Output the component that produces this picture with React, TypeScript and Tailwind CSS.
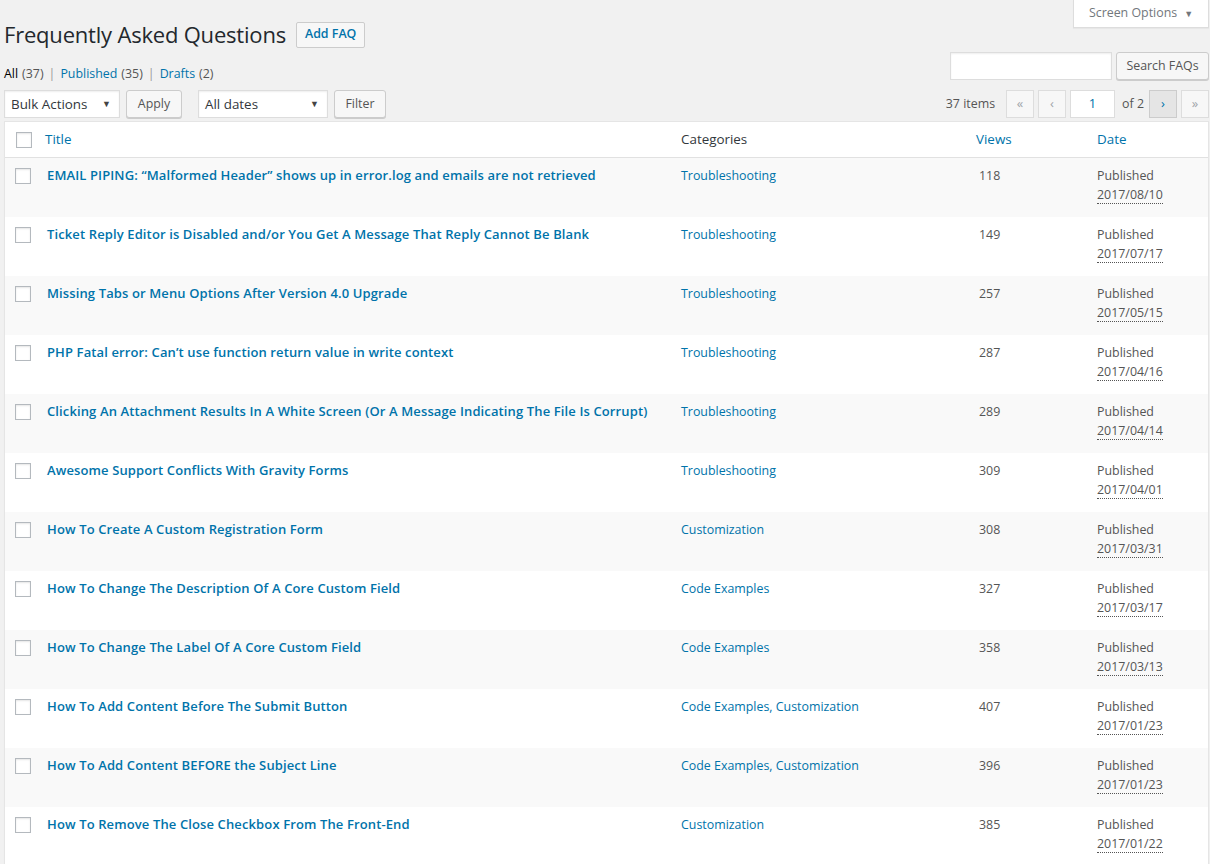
import React from "react";

type Faq = {
  title: string;
  cats: string;
  views: number;
  date: string;
};

const faqs: Faq[] = [
  { title: "EMAIL PIPING: “Malformed Header” shows up in error.log and emails are not retrieved", cats: "Troubleshooting", views: 118, date: "2017/08/10" },
  { title: "Ticket Reply Editor is Disabled and/or You Get A Message That Reply Cannot Be Blank", cats: "Troubleshooting", views: 149, date: "2017/07/17" },
  { title: "Missing Tabs or Menu Options After Version 4.0 Upgrade", cats: "Troubleshooting", views: 257, date: "2017/05/15" },
  { title: "PHP Fatal error: Can’t use function return value in write context", cats: "Troubleshooting", views: 287, date: "2017/04/16" },
  { title: "Clicking An Attachment Results In A White Screen (Or A Message Indicating The File Is Corrupt)", cats: "Troubleshooting", views: 289, date: "2017/04/14" },
  { title: "Awesome Support Conflicts With Gravity Forms", cats: "Troubleshooting", views: 309, date: "2017/04/01" },
  { title: "How To Create A Custom Registration Form", cats: "Customization", views: 308, date: "2017/03/31" },
  { title: "How To Change The Description Of A Core Custom Field", cats: "Code Examples", views: 327, date: "2017/03/17" },
  { title: "How To Change The Label Of A Core Custom Field", cats: "Code Examples", views: 358, date: "2017/03/13" },
  { title: "How To Add Content Before The Submit Button", cats: "Code Examples, Customization", views: 407, date: "2017/01/23" },
  { title: "How To Add Content BEFORE the Subject Line", cats: "Code Examples, Customization", views: 396, date: "2017/01/23" },
  { title: "How To Remove The Close Checkbox From The Front-End", cats: "Customization", views: 385, date: "2017/01/22" },
];

function Checkbox() {
  return (
    <span className="block w-4 h-4 bg-white border border-[#b4b9be] shadow-[inset_0_1px_2px_rgba(0,0,0,0.1)]" />
  );
}

function Select({ label, width }: { label: string; width: string }) {
  return (
    <div
      className={`${width} h-[28px] flex items-center justify-between bg-white border border-[#ddd] shadow-[inset_0_1px_2px_rgba(0,0,0,0.07)] pl-[6px] pr-[8px] text-[13.4px] text-[#32373c]`}
    >
      <span>{label}</span>
      <span className="text-[9px] text-[#444]">▼</span>
    </div>
  );
}

function Button({ children, className = "" }: { children: React.ReactNode; className?: string }) {
  return (
    <div
      className={`h-[28px] flex items-center justify-center whitespace-nowrap bg-[#f7f7f7] border border-[#ccc] rounded-[3px] shadow-[0_1px_0_#ccc] text-[12.4px] text-[#555] ${className}`}
    >
      {children}
    </div>
  );
}

function PageBtn({ children, active = false }: { children: React.ReactNode; active?: boolean }) {
  return (
    <div
      className={`w-[28px] h-[28px] flex items-center justify-center border text-[13px] ${
        active
          ? "bg-[#e5e5e5] border-[#ccc] text-[#0073aa]"
          : "bg-[#f7f7f7] border-[#ddd] text-[#a0a5aa]"
      }`}
    >
      {children}
    </div>
  );
}

export default function App() {
  return (
    <div
      className="min-h-screen w-[1210px] bg-[#f1f1f1] pl-[4px] pr-[1px] text-[12.4px] text-[#444]"
      style={{ fontFamily: '"Open Sans", "Noto Sans", sans-serif' }}
    >
      <div className="flex justify-between">
        {/* left */}
        <div className="flex flex-col">
          <div className="flex items-center mt-[21px] h-[27px]">
            <h1 className="text-[22px] tracking-[-0.2px] leading-[29px] text-[#23282d] font-normal">
              Frequently Asked Questions
            </h1>
            <div className="ml-[10px] h-[26px] flex items-center bg-[#f7f7f7] border border-[#ccc] rounded-[2px] px-[8px] text-[12.4px] font-semibold text-[#0073aa]">
              Add FAQ
            </div>
          </div>
          <div className="mt-[16px] h-[20px] flex items-center text-[12.4px] text-[#555]">
            <span className="text-black">All</span>
            <span className="ml-[4px]">(37)</span>
            <span className="mx-[5px] text-[#999]">|</span>
            <span className="text-[#0073aa]">Published</span>
            <span className="ml-[4px]">(35)</span>
            <span className="mx-[5px] text-[#999]">|</span>
            <span className="text-[#0073aa]">Drafts</span>
            <span className="ml-[4px]">(2)</span>
          </div>
          <div className="mt-[6px] flex items-center">
            <Select label="Bulk Actions" width="w-[116px]" />
            <Button className="ml-[6px] w-[56px]">Apply</Button>
            <Select label="All dates" width="w-[130px] ml-[16px]" />
            <Button className="ml-[6px] w-[52px]">Filter</Button>
          </div>
        </div>
        {/* right */}
        <div className="flex flex-col items-end">
          <div className="w-[136px] h-[28px] flex items-center justify-center gap-[7px] bg-white border border-t-0 border-[#ddd] shadow-[0_1px_1px_rgba(0,0,0,0.04)] text-[12.4px] text-[#72777c]">
            <span>Screen Options</span>
            <span className="text-[9px] text-[#72777c]">▼</span>
          </div>
          <div className="mt-[24px] flex items-center">
            <div className="w-[162px] h-[28px] bg-white border border-[#ddd] shadow-[inset_0_1px_2px_rgba(0,0,0,0.07)]" />
            <Button className="ml-[4px] w-[93px]">Search FAQs</Button>
          </div>
          <div className="mt-[10px] flex items-center">
            <span className="text-[12.4px] text-[#555] mr-[11px]">37 items</span>
            <PageBtn>«</PageBtn>
            <div className="ml-[4px]">
              <PageBtn>‹</PageBtn>
            </div>
            <div className="ml-[4px] w-[45px] h-[28px] flex items-center justify-center bg-white border border-[#ddd] text-[13px] text-[#0073aa]">
              1
            </div>
            <span className="ml-[7px] mr-[5px] text-[12.4px] text-[#555]">of 2</span>
            <PageBtn active>›</PageBtn>
            <div className="ml-[4px]">
              <PageBtn>»</PageBtn>
            </div>
          </div>
        </div>
      </div>

      <div className="mt-[3px] bg-white border border-[#e5e5e5] shadow-[0_1px_1px_rgba(0,0,0,0.04)]">
        <table className="w-full border-separate border-spacing-0 table-fixed">
          <colgroup>
            <col className="w-[33px]" />
            <col className="w-[634px]" />
            <col className="w-[295px]" />
            <col className="w-[121px]" />
            <col />
          </colgroup>
          <thead>
            <tr className="h-[36px] text-[13.4px]">
              <th className="pl-[11px] align-middle border-b border-[#e1e1e1]">
                <Checkbox />
              </th>
              <th className="text-left font-normal text-[#0073aa] pl-[7px] border-b border-[#e1e1e1]">Title</th>
              <th className="text-left font-normal text-[#32373c] pl-[9px] border-b border-[#e1e1e1]">Categories</th>
              <th className="text-left font-normal text-[#0073aa] pl-[9px] border-b border-[#e1e1e1]">Views</th>
              <th className="text-left font-normal text-[#0073aa] pl-[9px] border-b border-[#e1e1e1]">Date</th>
            </tr>
          </thead>
          <tbody>
            {faqs.map((f, i) => (
              <tr key={i} className={`h-[59px] align-top ${i % 2 === 0 ? "bg-[#f9f9f9]" : "bg-white"}`}>
                <td className="pl-[10px] pt-[10px]">
                  <Checkbox />
                </td>
                <td className="pl-[9px] pt-[8px] leading-[19px] text-[13px] tracking-[0.12px] font-semibold text-[#0073aa] whitespace-nowrap">
                  {f.title}
                </td>
                <td className="pl-[9px] pt-[8px] leading-[19px] text-[#0073aa]">{f.cats}</td>
                <td className="pl-[12px] pt-[8px] leading-[19px] text-[#555]">{f.views}</td>
                <td className="pl-[9px] pt-[8px] leading-[19px] text-[#555]">
                  <div>Published</div>
                  <div>
                    <span className="border-b border-dotted border-[#555]">{f.date}</span>
                  </div>
                </td>
              </tr>
            ))}
          </tbody>
        </table>
      </div>
    </div>
  );
}
